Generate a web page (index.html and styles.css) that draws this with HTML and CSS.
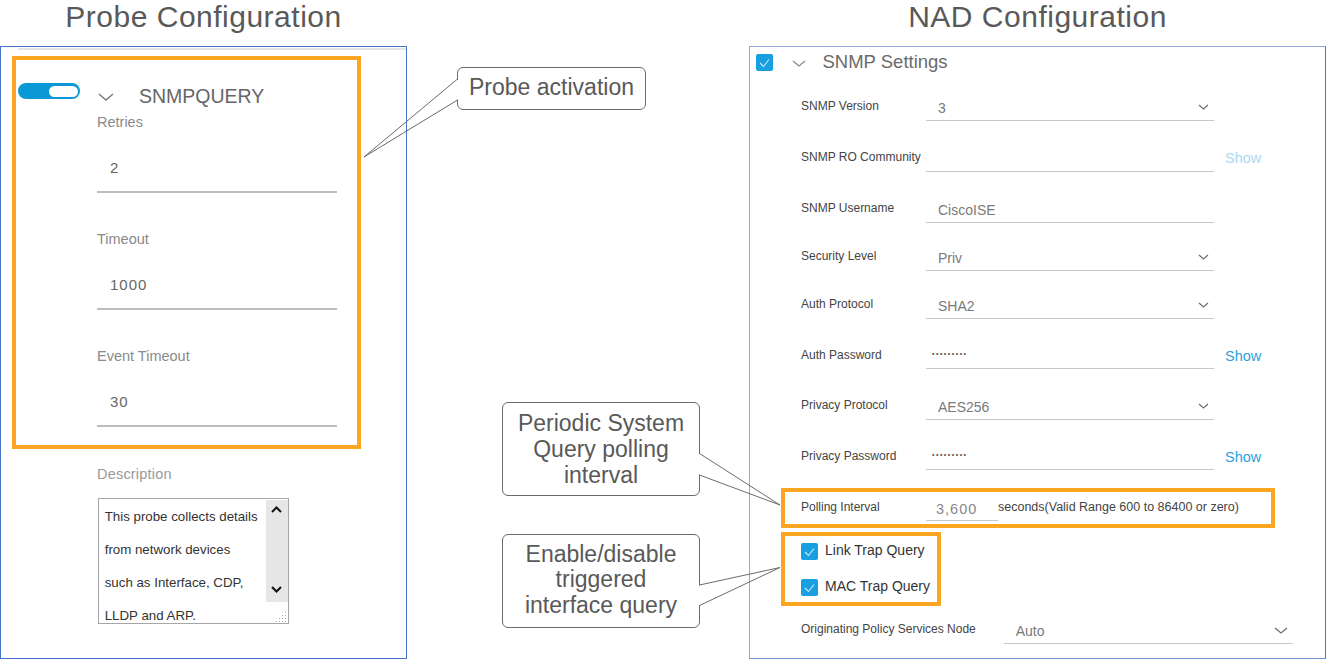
FILE: index.html
```html
<!DOCTYPE html>
<html lang="en">
<head>
<meta charset="utf-8">
<title>Probe and NAD Configuration</title>
<link rel="stylesheet" href="styles.css">
</head>
<body>
<div class="page">
  <section class="col col-left">
    <h1 class="title">Probe Configuration</h1>
    <div class="panel panel-probe">
      <div class="topline"></div>
      <div class="hl hl-probe">
        <div class="probe-head">
          <span class="toggle"><span class="knob"></span></span>
          <svg class="chev-probe" width="16" height="8" viewBox="0 0 16 8"><polyline points="1,1 8,7 15,1" fill="none" stroke="#7a7a7a" stroke-width="1.4"/></svg>
          <span class="probe-name">SNMPQUERY</span>
        </div>
        <div class="pfield">
          <div class="plabel">Retries</div>
          <div class="pvalue">2</div>
        </div>
        <div class="pfield">
          <div class="plabel">Timeout</div>
          <div class="pvalue">1000</div>
        </div>
        <div class="pfield">
          <div class="plabel">Event Timeout</div>
          <div class="pvalue">30</div>
        </div>
      </div>
      <div class="desc-label">Description</div>
      <div class="textarea">
        <div class="ta-text">
          <div>This probe collects details</div>
          <div>from network devices</div>
          <div>such as Interface, CDP,</div>
          <div>LLDP and ARP.</div>
        </div>
        <div class="ta-scroll">
          <div class="ta-track">
            <svg width="11" height="7" viewBox="0 0 11 7"><polyline points="1,6 5.5,1.5 10,6" fill="none" stroke="#111" stroke-width="2"/></svg>
            <svg width="11" height="7" viewBox="0 0 11 7"><polyline points="1,1 5.5,5.5 10,1" fill="none" stroke="#111" stroke-width="2"/></svg>
          </div>
          <div class="ta-grip">
            <svg width="12" height="12" viewBox="0 0 12 12"><g fill="#a8a8a8"><rect x="10" y="2" width="1" height="1"/><rect x="10" y="5" width="1" height="1"/><rect x="7" y="5" width="1" height="1"/><rect x="10" y="8" width="1" height="1"/><rect x="7" y="8" width="1" height="1"/><rect x="4" y="8" width="1" height="1"/><rect x="10" y="11" width="1" height="1"/><rect x="7" y="11" width="1" height="1"/><rect x="4" y="11" width="1" height="1"/><rect x="1" y="11" width="1" height="1"/></g></svg>
          </div>
        </div>
      </div>
    </div>
  </section>

  <section class="col col-right">
    <h1 class="title">NAD Configuration</h1>
    <div class="panel panel-nad">
      <div class="nad-head">
        <svg class="cb" width="17" height="17" viewBox="0 0 17 17"><rect width="17" height="17" rx="2" fill="#189fdf"/><polyline points="4,9 7.5,12.5 13,5.5" fill="none" stroke="#cdeaf8" stroke-width="1.1"/></svg>
        <svg class="chev-head" width="14" height="7" viewBox="0 0 14 7"><polyline points="1,1 7,6 13,1" fill="none" stroke="#8a8a8a" stroke-width="1.3"/></svg>
        <span class="nad-title">SNMP Settings</span>
      </div>
      <div class="rows">
        <div class="row row-tall">
          <span class="lbl">SNMP Version</span>
          <div class="fld"><span class="val">3</span><svg class="dd" width="11" height="6" viewBox="0 0 11 6"><polyline points="1,1 5.5,5 10,1" fill="none" stroke="#707070" stroke-width="1.3"/></svg></div>
        </div>
        <div class="row row-tall">
          <span class="lbl">SNMP RO Community</span>
          <div class="fld"><span class="val"></span></div>
          <span class="show show-off">Show</span>
        </div>
        <div class="row row-short">
          <span class="lbl">SNMP Username</span>
          <div class="fld"><span class="val">CiscoISE</span></div>
        </div>
        <div class="row row-short">
          <span class="lbl">Security Level</span>
          <div class="fld"><span class="val">Priv</span><svg class="dd" width="11" height="6" viewBox="0 0 11 6"><polyline points="1,1 5.5,5 10,1" fill="none" stroke="#707070" stroke-width="1.3"/></svg></div>
        </div>
        <div class="row">
          <span class="lbl">Auth Protocol</span>
          <div class="fld"><span class="val">SHA2</span><svg class="dd" width="11" height="6" viewBox="0 0 11 6"><polyline points="1,1 5.5,5 10,1" fill="none" stroke="#707070" stroke-width="1.3"/></svg></div>
        </div>
        <div class="row">
          <span class="lbl">Auth Password</span>
          <div class="fld fld-pw"><span class="val dots">•••••••••</span></div>
          <span class="show">Show</span>
        </div>
        <div class="row">
          <span class="lbl">Privacy Protocol</span>
          <div class="fld"><span class="val">AES256</span><svg class="dd" width="11" height="6" viewBox="0 0 11 6"><polyline points="1,1 5.5,5 10,1" fill="none" stroke="#707070" stroke-width="1.3"/></svg></div>
        </div>
        <div class="row row-last">
          <span class="lbl">Privacy Password</span>
          <div class="fld fld-pw"><span class="val dots">•••••••••</span></div>
          <span class="show">Show</span>
        </div>

        <div class="hl hl-poll">
          <div class="row row-poll">
            <span class="lbl">Polling Interval</span>
            <div class="fld fld-poll"><span class="val val-num">3,600</span></div>
            <span class="unit">seconds(Valid Range 600 to 86400 or zero)</span>
          </div>
        </div>

        <div class="hl hl-checks">
          <label class="check">
            <svg class="cb" width="17" height="17" viewBox="0 0 17 17"><rect width="17" height="17" rx="2" fill="#189fdf"/><polyline points="4,9 7.5,12.5 13,5.5" fill="none" stroke="#cdeaf8" stroke-width="1.1"/></svg>
            <span>Link Trap Query</span>
          </label>
          <label class="check">
            <svg class="cb" width="17" height="17" viewBox="0 0 17 17"><rect width="17" height="17" rx="2" fill="#189fdf"/><polyline points="4,9 7.5,12.5 13,5.5" fill="none" stroke="#cdeaf8" stroke-width="1.1"/></svg>
            <span>MAC Trap Query</span>
          </label>
        </div>

        <div class="row row-orig">
          <span class="lbl lbl-wide">Originating Policy Services Node</span>
          <div class="fld fld-orig"><span class="val">Auto</span><svg class="dd" width="14" height="7" viewBox="0 0 14 7"><polyline points="1,1 7,6 13,1" fill="none" stroke="#707070" stroke-width="1.3"/></svg></div>
        </div>
      </div>
    </div>
  </section>

  <div class="callout c-probe">Probe activation</div>
  <div class="callout c-poll">Periodic System<br>Query polling<br>interval</div>
  <div class="callout c-trap">Enable/disable<br>triggered<br>interface query</div>

  <svg class="tails" width="1327" height="660" viewBox="0 0 1327 660">
    <line x1="457.5" y1="80" x2="457.5" y2="99.5" stroke="#fff" stroke-width="2"/>
    <polyline points="457.5,79 364,157 457.5,100" fill="none" stroke="#6b6b6b" stroke-width="1"/>
    <line x1="699.5" y1="454" x2="699.5" y2="474.5" stroke="#fff" stroke-width="2"/>
    <polyline points="699.5,453.5 780,505 699.5,475" fill="none" stroke="#6b6b6b" stroke-width="1"/>
    <line x1="699.5" y1="585.5" x2="699.5" y2="605" stroke="#fff" stroke-width="2"/>
    <polyline points="699.5,585 780,567.5 699.5,605.5" fill="none" stroke="#6b6b6b" stroke-width="1"/>
  </svg>
</div>
</body>
</html>
```

FILE: styles.css
```css
* { box-sizing: border-box; }
html, body { margin: 0; padding: 0; background: #fff; }
body { font-family: "Liberation Sans", Arial, sans-serif; color: #444; }

.page {
  position: relative;
  width: 1327px;
  height: 660px;
  display: flex;
  overflow: hidden;
}
.col { display: flex; flex-direction: column; }
.col-left { width: 407px; }
.col-right { width: 577px; margin-left: 342px; }

.title {
  margin: 0;
  height: 46px;
  font-weight: normal;
  font-size: 30px;
  line-height: 34px;
  letter-spacing: 0.5px;
  color: #595959;
  text-align: center;
}

.panel { height: 613px; border: 1px solid #4472c4; }

/* ---------- Probe panel ---------- */
.topline { height: 2px; margin: 1px 0 0 17px; background: #e4e4e4; }

.hl { border: 4px solid #fba521; }
.hl-probe { width: 349px; margin: 6px 0 0 11px; padding-bottom: 18px; }

.probe-head { display: flex; align-items: flex-start; height: 53.5px; }
.toggle {
  width: 62px; height: 16px; margin: 23px 0 0 2px;
  border-radius: 8px; background: #0a99d6;
  display: flex; justify-content: flex-end; align-items: center;
  padding-right: 2px; flex: none;
}
.knob { width: 29px; height: 11px; border-radius: 6px; background: #fff; }
.chev-probe { margin: 33px 0 0 18px; flex: none; }
.probe-name { margin: 24.5px 0 0 25px; font-size: 19.5px; line-height: 22px; color: #666; }

.pfield { margin: 0 0 38.2px 81px; width: 240px; }
.pfield:last-child { margin-bottom: 0; }
.plabel { font-size: 14.5px; line-height: 17px; color: #8a8a8a; }
.pvalue {
  margin-top: 28px; padding: 0 0 14px 13px;
  font-size: 15px; line-height: 18px; letter-spacing: 1px; color: #666;
  border-bottom: 2px solid #bdbdbd;
}

.desc-label { margin: 17px 0 0 96px; font-size: 14.5px; line-height: 17px; color: #9a9a9a; letter-spacing: 0.2px; }
.textarea {
  margin: 15px 0 0 96.7px; width: 191px; height: 126px;
  border: 1px solid #a6a6a6; display: flex; overflow: hidden;
}
.ta-text { flex: 1; padding: 1px 0 0 6px; font-size: 13.3px; line-height: 33px; color: #333; white-space: nowrap; overflow: hidden; }
.ta-scroll { width: 22px; display: flex; flex-direction: column; flex: none; }
.ta-track {
  height: 102px; margin-top: 1px; background: #e6e6e6;
  display: flex; flex-direction: column; justify-content: space-between; align-items: center;
  padding: 6.5px 0 8.5px;
}
.ta-grip { flex: 1; display: flex; justify-content: flex-end; align-items: flex-end; padding: 0 1px 1px 0; }

/* ---------- NAD panel ---------- */
.panel-nad {
  border: 1px solid #8eaadb;
  border-right-color: #4a76c6;
  border-bottom-color: #7396d2;
}
.nad-head { display: flex; align-items: flex-start; height: 52px; }
.cb { flex: none; display: block; }
.nad-head .cb { margin: 7px 0 0 6px; }
.chev-head { margin: 12.5px 0 0 19px; flex: none; }
.nad-title { margin: 4px 0 0 16.5px; font-size: 18.5px; line-height: 22px; color: #6b6b6b; }

.rows { padding-left: 51px; }
.row { display: flex; align-items: flex-start; height: 50.5px; }
.row-tall { height: 51px; }
.row-short { height: 48px; }
.row-last { height: 39.1px; }

.lbl { width: 125px; flex: none; font-size: 12px; line-height: 14px; color: #444; white-space: nowrap; }
.fld {
  width: 288px; flex: none;
  display: flex; justify-content: space-between; align-items: flex-start;
  padding: 1px 5px 3.5px 12px;
  border-bottom: 1.5px solid #c8c8c8;
}
.val { display: block; height: 16px; font-size: 14px; line-height: 16px; color: #7a7a7a; }
.fld-pw { padding-left: 6px; }
.dots { font-size: 7px; line-height: 10px; letter-spacing: 1.5px; color: #555; }
.dd { margin-top: 4px; flex: none; }
.show { margin: 1px 0 0 11px; font-size: 14.5px; line-height: 14px; color: #2ba1dc; }
.show-off { color: #a9d9f1; }

.hl-poll { margin-left: -20px; width: 494px; height: 40px; padding: 8px 0 0 16px; }
.row-poll { height: 24px; }
.fld-poll { width: 72px; padding-left: 10px; }
.val-num { font-size: 14.5px; letter-spacing: 1px; color: #888; }
.unit { font-size: 12.5px; line-height: 14px; color: #444; white-space: nowrap; }

.hl-checks {
  margin: 4.6px 0 0 -20px; width: 160px; height: 73.7px;
  padding: 7px 0 0 16px;
  display: flex; flex-direction: column; gap: 19px;
}
.check { display: flex; align-items: flex-start; gap: 7px; height: 17px; font-size: 14px; line-height: 15px; color: #333; white-space: nowrap; }

.row-orig { margin-top: 16.4px; }
.lbl-wide { width: 202.7px; }
.fld-orig { width: 289px; }

/* ---------- Callouts ---------- */
.callout {
  position: absolute;
  border: 1px solid #6b6b6b;
  border-radius: 6px;
  color: #595959;
  font-size: 23px;
  text-align: center;
  background: transparent;
}
.c-probe { left: 457px; top: 67px; width: 189px; height: 43px; line-height: 38px; }
.c-poll { left: 502px; top: 402px; width: 198px; height: 94px; padding-top: 6.7px; line-height: 26px; }
.c-trap { left: 502px; top: 534px; width: 198px; height: 94px; padding-top: 6.6px; line-height: 25.5px; }
.tails { position: absolute; left: 0; top: 0; pointer-events: none; }
```
